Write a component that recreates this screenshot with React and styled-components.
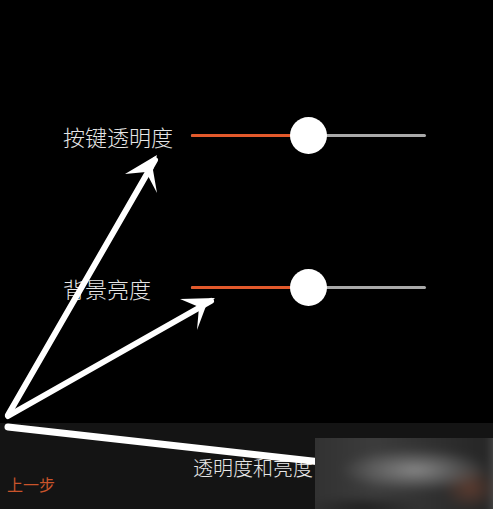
import React from 'react';
import styled, { createGlobalStyle } from 'styled-components';

const GlobalStyle = createGlobalStyle`
  html, body {
    margin: 0;
    padding: 0;
    background: #000;
  }
  body {
    font-family: "Noto Sans CJK SC", "Noto Sans", sans-serif;
  }
`;

const Screen = styled.div`
  position: relative;
  width: 493px;
  height: 509px;
  overflow: hidden;
  background: #000;
  display: flex;
  flex-direction: column;
`;

const Settings = styled.div`
  height: 423px;
  box-sizing: border-box;
  padding-top: 117px;
  display: flex;
  flex-direction: column;
  gap: 115px;
`;

const Row = styled.div`
  display: flex;
  align-items: center;
  height: 37px;
  padding-left: 63px;
`;

const Label = styled.span`
  width: 128px;
  font-size: 22px;
  font-weight: 300;
  color: #e6e6e6;
  line-height: 1;
`;

const Track = styled.div`
  position: relative;
  width: 235px;
  height: 3px;
  background: #a9a9a9;
  border-radius: 2px;
`;

const Fill = styled.div`
  height: 100%;
  background: #e3592b;
  border-radius: 2px;
`;

// the knob sits over the track
const Thumb = styled.div`
  position: absolute;
  top: 50%;
  width: 37px;
  height: 37px;
  margin-left: -18.5px;
  margin-top: -18.5px;
  border-radius: 50%;
  background: #fff;
`;

const BottomBar = styled.div`
  position: relative;
  flex: 1;
  display: flex;
  align-items: flex-start;
  gap: 138px;
  box-sizing: border-box;
  padding: 35px 0 0 7px;
  background: #141414;
`;

const Back = styled.span`
  margin-top: 18px;
  font-size: 16px;
  color: #c9542b;
  line-height: 1;
`;

const Title = styled.span`
  font-size: 20px;
  font-weight: 300;
  color: #e8e8e8;
  line-height: 1;
`;

// blurred watermark pasted over the corner of the screenshot
const Watermark = styled.div`
  position: absolute;
  left: 315px;
  top: 15px;
  right: 0;
  bottom: 0;
  overflow: hidden;
  background: #2a2a2a;
  z-index: 2;
`;

const WatermarkBlur = styled.div`
  position: absolute;
  inset: -10px;
  background:
    radial-gradient(ellipse 75px 22px at 110px 42px, rgba(140,140,140,0.95), rgba(140,140,140,0) 100%),
    radial-gradient(ellipse 28px 22px at 165px 60px, rgba(100,62,48,0.85), rgba(100,62,48,0) 100%),
    radial-gradient(ellipse 60px 12px at 60px 80px, rgba(20,20,20,0.8), rgba(20,20,20,0) 100%),
    linear-gradient(90deg, #303030 0%, #3c3c3c 35%, #2c2c2c 75%, #262626 92%, #6a6a6a 100%);
  filter: blur(4px);
`;

const Arrows = styled.svg`
  position: absolute;
  left: 0;
  top: 0;
  pointer-events: none;
  z-index: 1;
`;

const sliders = [
  { label: '按键透明度', value: 0.5 },
  { label: '背景亮度', value: 0.5 },
];

const App = () => (
  <>
    <GlobalStyle />
    <Screen>
      <Settings>
        {sliders.map((s) => (
          <Row key={s.label}>
            <Label>{s.label}</Label>
            <Track>
              <Fill style={{ width: `${s.value * 100}%` }} />
              <Thumb style={{ left: `${s.value * 100}%` }} />
            </Track>
          </Row>
        ))}
      </Settings>
      <BottomBar>
        <Back>上一步</Back>
        <Title>透明度和亮度</Title>
        <Watermark>
          <WatermarkBlur />
        </Watermark>
      </BottomBar>
      <Arrows width="493" height="509" viewBox="0 0 493 509">
        <g stroke="#fff" strokeWidth="6" strokeLinecap="round" strokeLinejoin="round" fill="none">
          <line x1="8" y1="415" x2="155" y2="160" />
          <line x1="8" y1="416" x2="211" y2="301" />
          <line x1="8" y1="427" x2="330" y2="463" strokeWidth="7" />
        </g>
        <g fill="#fff">
          <polygon points="157,155 125,174 146,172 157,193 153,170" />
          <polygon points="215,298 180,299 199,307 197,330 206,306" />
        </g>
      </Arrows>
    </Screen>
  </>
);

export default App;
